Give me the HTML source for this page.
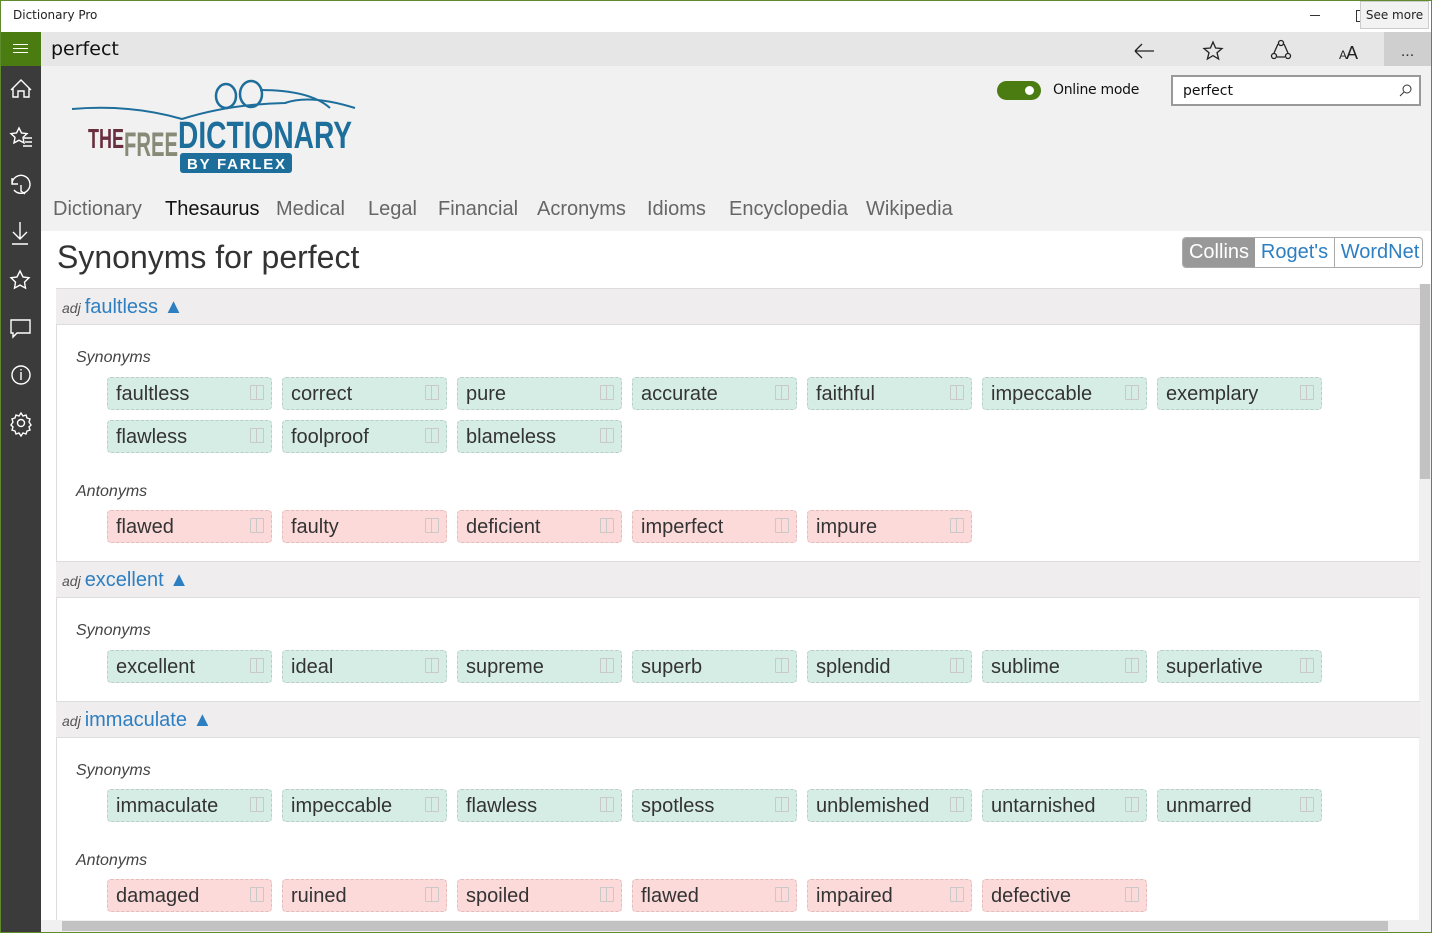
<!DOCTYPE html>
<html><head><meta charset="utf-8"><style>
*{margin:0;padding:0;box-sizing:border-box}
body{width:1432px;height:933px;overflow:hidden;position:relative;background:#fff;font-family:"Liberation Sans",Arial,sans-serif;color:#333}
.a{position:absolute}
.c{position:absolute;width:165px;height:33px;border:1px dashed #b9cfc6;border-radius:4px;background:#d6ede5;font-size:20px;line-height:33px;padding-left:8px;color:#333}
.r{background:#fcdada;border-color:#e3bcbc}
.c:after{content:"";position:absolute;right:7px;top:7px;width:12px;height:13px;border:1px solid #c9c9c9;border-radius:1px;background:linear-gradient(90deg,transparent 5px,#c9c9c9 5px,#c9c9c9 6px,transparent 6px)}
.h{position:absolute;left:56px;width:1364px;height:37px;background:#efeded;border-top:1px solid #ddd;border-bottom:1px solid #ddd;font-size:20px;line-height:36px;padding-left:6px;color:#2e7fc2}
.h i{font-size:14px;color:#555;margin-right:4px}
.l{position:absolute;left:76px;font-style:italic;font-size:16px;color:#444}
.nav{position:absolute;top:198px;font-family:"Liberation Sans",sans-serif;font-size:20px;color:#666}
</style></head><body>
<div class="a" style="left:0;top:0;width:1432px;height:933px;border:1px solid #5f8c2a;z-index:50;pointer-events:none"></div>
<div class="a" style="left:13px;top:8px;font-family:'DejaVu Sans',sans-serif;font-size:12px;color:#222">Dictionary Pro</div>
<div class="a" style="left:1310px;top:15px;width:10px;height:1px;background:#333"></div>
<div class="a" style="left:1356px;top:10px;width:4px;height:12px;border:1px solid #333;border-right:none"></div>
<div class="a" style="left:1360px;top:1px;width:69px;height:28px;border:1px solid #ccc;background:#f2f2f2;font-family:'DejaVu Sans',sans-serif;font-size:12px;line-height:26px;text-align:center;color:#222">See more</div>
<!-- sidebar -->
<div class="a" style="left:0;top:32px;width:41px;height:901px;background:#3b3b3b"></div>
<div class="a" style="left:0;top:32px;width:41px;height:34px;background:#4a7c12"></div>
<div class="a" style="left:13px;top:44px;width:15px;height:9px;border-top:1px solid #fff;border-bottom:1px solid #fff"></div>
<div class="a" style="left:13px;top:48px;width:15px;height:1px;background:#fff"></div>
<svg class="a" style="left:0;top:66px" width="41" height="380" fill="none" stroke="#fff" stroke-width="1.4">
<path d="M11 24 L21 14 L31 24 M13 22 V31 H18 V25 H24 V31 H29 V22"/>
<path d="M19 62 l2.5 5 5.5 .6 -4 3.8 1 5.5 -5 -2.7 -5 2.7 1 -5.5 -4 -3.8 5.5 -.6z M24 72 h8 M25 76 h7 M23 80 h9"/>
<path d="M12 118 a9 9 0 1 1 2 6 M12 112 v6 h6 M21 119 v6 l4 3"/>
<path d="M20 156 v17 M13 166 l7 7 7 -7 M12 178 h16"/>
<path d="M20 205 l3 6 6 .8 -4.5 4.3 1 6 -5.5 -3 -5.5 3 1 -6 -4.5 -4.3 6 -.8z"/>
<path d="M11 254 h19 v13 h-13 l-4 4 v-4 h-2z"/>
<circle cx="21" cy="309" r="9"/><path d="M21 306 v8 M21 303 v1.5"/>
<circle cx="21" cy="357" r="3.5"/><path d="M21 347 l2 3 3 -1 1 3 3 1 -1 3 2 3 -2 2 1 3 -3 1 -1 3 -3 -1 -2 3 -2 -3 -3 1 -1 -3 -3 -1 1 -3 -2 -2 2 -3 -1 -3 3 -1 1 -3 3 1z"/>
</svg>
<!-- toolbar -->
<div class="a" style="left:41px;top:32px;width:1390px;height:34px;background:#e6e6e6"></div>
<div class="a" style="left:51px;top:38px;font-family:'DejaVu Sans',sans-serif;font-size:19px;color:#111">perfect</div>
<div class="a" style="left:1384px;top:32px;width:47px;height:34px;background:#cfcfcf;text-align:center;font-size:16px;line-height:40px;color:#333">...</div>
<svg class="a" style="left:1130px;top:38px" width="240" height="26" fill="none" stroke="#222" stroke-width="1.3">
<path d="M5 13 h19 M5 13 l7 -7 M5 13 l7 7"/>
<path d="M83 4 l2.6 6 6.4 .5 -5 4.2 1.6 6.3 -5.6 -3.4 -5.6 3.4 1.6 -6.3 -5 -4.2 6.4 -.5z"/>
<circle cx="151" cy="5" r="2.5"/><circle cx="144" cy="18" r="2.5"/><circle cx="158" cy="18" r="2.5"/><path d="M148 6 l-4 9 M154 6 l4 9 M147 19 h8"/>
<text x="209" y="21" font-family="Liberation Sans" font-size="12" fill="#222" stroke="none">A</text><text x="216" y="21" font-family="Liberation Sans" font-size="18" fill="#222" stroke="none">A</text>
</svg>
<!-- header -->
<div class="a" style="left:41px;top:66px;width:1390px;height:165px;background:#f1f1f1"></div>
<svg class="a" style="left:70px;top:76px" width="290" height="100">
<path d="M2 33 Q60 28 112 43 Q160 28 215 27 Q240 18 285 32" fill="none" stroke="#1e6e9c" stroke-width="2"/>
<ellipse cx="156" cy="20" rx="10" ry="12" fill="none" stroke="#1e6e9c" stroke-width="2.5"/>
<ellipse cx="181" cy="18" rx="11" ry="13" fill="none" stroke="#1e6e9c" stroke-width="2.5"/>
<path d="M190 14 Q240 14 260 32" fill="none" stroke="#1e6e9c" stroke-width="2"/>
<text x="18" y="72" font-family="Liberation Sans" font-weight="bold" font-size="28" fill="#6a2f3f" textLength="36" lengthAdjust="spacingAndGlyphs">THE</text>
<text x="54" y="80" font-family="Liberation Sans" font-weight="bold" font-size="34" fill="#888a78" textLength="54" lengthAdjust="spacingAndGlyphs">FREE</text>
<text x="108" y="72" font-family="Liberation Sans" font-weight="bold" font-size="38" fill="#1e6e9c" textLength="174" lengthAdjust="spacingAndGlyphs">DICTIONARY</text>
<rect x="110" y="77" width="112" height="20" rx="3" fill="#1e6e9c"/>
<text x="117" y="93" font-family="Liberation Sans" font-weight="bold" font-size="15" fill="#fff" textLength="98" lengthAdjust="spacing">BY FARLEX</text>
</svg>
<div class="a" style="left:997px;top:81px;width:44px;height:19px;border-radius:10px;background:#4a7c12"></div>
<div class="a" style="left:1025px;top:86px;width:9px;height:9px;border-radius:50%;background:#fff"></div>
<div class="a" style="left:1053px;top:82px;font-family:'DejaVu Sans',sans-serif;font-size:14px;color:#111;letter-spacing:-0.3px">Online mode</div>
<div class="a" style="left:1171px;top:75px;width:250px;height:31px;border:2px solid #999;background:#fff;font-family:'DejaVu Sans',sans-serif;font-size:14px;line-height:29px;padding-left:10px;color:#111">perfect</div>
<svg class="a" style="left:1399px;top:83px" width="14" height="14" fill="none" stroke="#333"><circle cx="8" cy="6" r="4"/><path d="M5 9 l-4 4"/></svg>
<div class="nav" style="left:53px">Dictionary</div>
<div class="nav" style="left:165px;color:#111">Thesaurus</div>
<div class="nav" style="left:276px">Medical</div>
<div class="nav" style="left:368px">Legal</div>
<div class="nav" style="left:438px">Financial</div>
<div class="nav" style="left:537px">Acronyms</div>
<div class="nav" style="left:647px">Idioms</div>
<div class="nav" style="left:729px">Encyclopedia</div>
<div class="nav" style="left:866px">Wikipedia</div>
<!-- content -->
<div class="a" style="left:57px;top:239px;font-size:32px;color:#333">Synonyms for perfect</div>
<div class="a" style="left:1182px;top:237px;width:241px;height:31px;border:1px solid #aaa;border-radius:4px;overflow:hidden;font-size:20px;line-height:29px">
<span class="a" style="left:0;top:0;width:72px;height:31px;background:#999;color:#fff;text-align:center">Collins</span>
<span class="a" style="left:72px;top:0;width:80px;height:31px;border-right:1px solid #aaa;color:#2e7fc2;text-align:center">Roget's</span>
<span class="a" style="left:152px;top:0;width:90px;color:#2e7fc2;text-align:center">WordNet</span></div>
<div class="a" style="left:56px;top:288px;width:1px;height:632px;background:#ddd"></div>
<div class="a" style="left:1419px;top:284px;width:12px;height:636px;background:#f0f0f0"></div>
<div class="a" style="left:1420px;top:284px;width:10px;height:195px;background:#c2c2c2"></div>
<div class="a" style="left:41px;top:920px;width:1390px;height:12px;background:#f0f0f0"></div>
<div class="a" style="left:62px;top:921px;width:1326px;height:10px;background:#c2c2c2"></div>

<div class="h" style="top:288px"><i>adj</i>faultless ▲</div>
<div class="l" style="top:349px">Synonyms</div>
<div class="c" style="left:107px;top:377px">faultless</div><div class="c" style="left:282px;top:377px">correct</div><div class="c" style="left:457px;top:377px">pure</div><div class="c" style="left:632px;top:377px">accurate</div><div class="c" style="left:807px;top:377px">faithful</div><div class="c" style="left:982px;top:377px">impeccable</div><div class="c" style="left:1157px;top:377px">exemplary</div>
<div class="c" style="left:107px;top:420px">flawless</div><div class="c" style="left:282px;top:420px">foolproof</div><div class="c" style="left:457px;top:420px">blameless</div>
<div class="l" style="top:483px">Antonyms</div>
<div class="c r" style="left:107px;top:510px">flawed</div><div class="c r" style="left:282px;top:510px">faulty</div><div class="c r" style="left:457px;top:510px">deficient</div><div class="c r" style="left:632px;top:510px">imperfect</div><div class="c r" style="left:807px;top:510px">impure</div>

<div class="h" style="top:561px"><i>adj</i>excellent ▲</div>
<div class="l" style="top:622px">Synonyms</div>
<div class="c" style="left:107px;top:650px">excellent</div><div class="c" style="left:282px;top:650px">ideal</div><div class="c" style="left:457px;top:650px">supreme</div><div class="c" style="left:632px;top:650px">superb</div><div class="c" style="left:807px;top:650px">splendid</div><div class="c" style="left:982px;top:650px">sublime</div><div class="c" style="left:1157px;top:650px">superlative</div>

<div class="h" style="top:701px"><i>adj</i>immaculate ▲</div>
<div class="l" style="top:762px">Synonyms</div>
<div class="c" style="left:107px;top:789px">immaculate</div><div class="c" style="left:282px;top:789px">impeccable</div><div class="c" style="left:457px;top:789px">flawless</div><div class="c" style="left:632px;top:789px">spotless</div><div class="c" style="left:807px;top:789px">unblemished</div><div class="c" style="left:982px;top:789px">untarnished</div><div class="c" style="left:1157px;top:789px">unmarred</div>
<div class="l" style="top:852px">Antonyms</div>
<div class="c r" style="left:107px;top:879px">damaged</div><div class="c r" style="left:282px;top:879px">ruined</div><div class="c r" style="left:457px;top:879px">spoiled</div><div class="c r" style="left:632px;top:879px">flawed</div><div class="c r" style="left:807px;top:879px">impaired</div><div class="c r" style="left:982px;top:879px">defective</div>
</body></html>
